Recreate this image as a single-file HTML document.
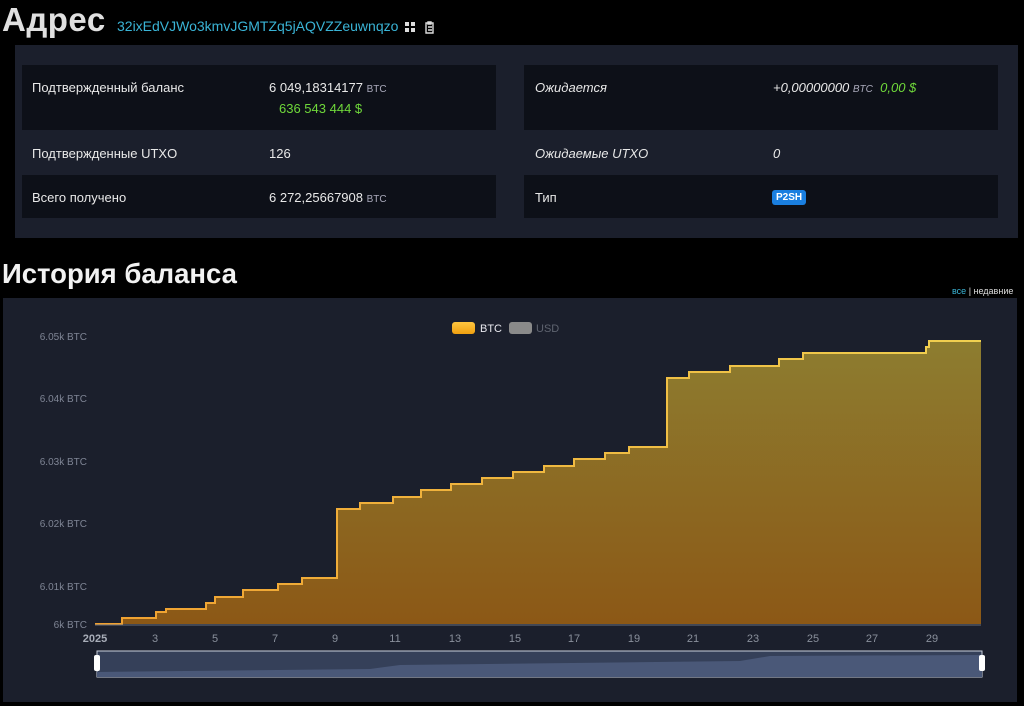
<!DOCTYPE html>
<html><head><meta charset="utf-8"><style>
*{margin:0;padding:0;box-sizing:border-box}
body{width:1024px;height:706px;background:#000;font-family:"Liberation Sans","DejaVu Sans",sans-serif;color:#e6e6e6;position:relative;overflow:hidden}
.a{position:absolute;white-space:nowrap}
.panel{background:#1b1f2c}
.dark{background:#0d1018}
.l{font-size:13px;color:#e8e8e8}
.btc{font-size:10px;color:#aab}
.g{color:#6fd83a}
i{font-style:italic}
</style></head><body>
<div class="a" style="left:2px;top:1px;font-size:33px;color:#e0e0e0;font-weight:bold;letter-spacing:0.5px">Адрес</div>
<div class="a" style="left:117px;top:18px;font-size:14px;color:#3ab4d6">32ixEdVJWo3kmvJGMTZq5jAQVZZeuwnqzo</div>
<svg class="a" style="left:405px;top:21px" width="32" height="14"><g fill="#ddd"><rect x="0" y="1" width="4" height="4"/><rect x="6" y="1" width="4" height="4"/><rect x="0" y="7" width="4" height="4"/><rect x="6" y="7" width="4" height="4"/></g><path d="M21 2h7v10h-7z M23 1h3v2h-3z M23 6h4 M23 9h4" stroke="#ddd" stroke-width="1.4" fill="none"/></svg>

<div class="a panel" style="left:15px;top:45px;width:1003px;height:193px"></div>
<div class="a dark" style="left:22px;top:65px;width:474px;height:65px"></div>
<div class="a dark" style="left:22px;top:175px;width:474px;height:43px"></div>
<div class="a dark" style="left:524px;top:65px;width:474px;height:65px"></div>
<div class="a dark" style="left:524px;top:175px;width:474px;height:43px"></div>

<div class="a l" style="left:32px;top:80px">Подтвержденный баланс</div>
<div class="a l" style="left:269px;top:80px">6 049,18314177 <span class="btc">BTC</span></div>
<div class="a l g" style="left:279px;top:101px">636 543 444 $</div>
<div class="a l" style="left:32px;top:146px">Подтвержденные UTXO</div>
<div class="a l" style="left:269px;top:146px">126</div>
<div class="a l" style="left:32px;top:190px">Всего получено</div>
<div class="a l" style="left:269px;top:190px">6 272,25667908 <span class="btc">BTC</span></div>

<div class="a l" style="left:535px;top:80px"><i>Ожидается</i></div>
<div class="a l" style="left:773px;top:80px"><i>+0,00000000 <span class="btc">BTC</span> &nbsp;<span class="g">0,00 $</span></i></div>
<div class="a l" style="left:535px;top:146px"><i>Ожидаемые UTXO</i></div>
<div class="a l" style="left:773px;top:146px"><i>0</i></div>
<div class="a l" style="left:535px;top:190px">Тип</div>
<div class="a" style="left:772px;top:190px;background:#1a7fe0;color:#fff;font-size:10px;font-weight:bold;padding:2px 4px;border-radius:3px">P2SH</div>

<div class="a" style="left:2px;top:258px;font-size:27.5px;font-weight:bold;color:#f2f2f2">История баланса</div>
<div class="a" style="left:952px;top:286px;font-size:9px;color:#ddd"><span style="color:#3ab4d6">все</span> | недавние</div>

<div class="a panel" style="left:3px;top:298px;width:1014px;height:404px"></div>
<svg class="a" style="left:0;top:0" width="1024" height="706">
<defs>
<linearGradient id="f" x1="0" y1="0" x2="0" y2="1"><stop offset="0" stop-color="#8d7d30"/><stop offset="1" stop-color="#8c5816"/></linearGradient>
<linearGradient id="s" x1="0" y1="0" x2="1" y2="0"><stop offset="0" stop-color="#f0a030"/><stop offset="1" stop-color="#f0d050"/></linearGradient>
<linearGradient id="lg" x1="0" y1="0" x2="0" y2="1"><stop offset="0" stop-color="#ffc640"/><stop offset="1" stop-color="#f0a010"/></linearGradient>
</defs>
<g font-size="10" fill="#7f8595" text-anchor="end">
<text x="87" y="340">6.05k BTC</text><text x="87" y="402">6.04k BTC</text><text x="87" y="465">6.03k BTC</text><text x="87" y="527">6.02k BTC</text><text x="87" y="590">6.01k BTC</text><text x="87" y="628">6k BTC</text>
</g>
<path d="M95 624H122V618H156V612H166V609H206V603H215V597H243V590H278V584H302V578H337V509H360V503H393V497H421V490H451V484H482V478H513V472H544V466H574V459H605V453H629V447H667V378H689V372H730V366H779V359H803V353H926V347H929V341H981V624Z" fill="url(#f)"/>
<path d="M95 624H122V618H156V612H166V609H206V603H215V597H243V590H278V584H302V578H337V509H360V503H393V497H421V490H451V484H482V478H513V472H544V466H574V459H605V453H629V447H667V378H689V372H730V366H779V359H803V353H926V347H929V341H981" fill="none" stroke="url(#s)" stroke-width="2"/>
<line x1="95" y1="625" x2="981" y2="625" stroke="#6a6f7c"/>
<g font-size="11" fill="#8a909c" text-anchor="middle">
<text x="95" y="642" font-weight="bold" fill="#a8adb8">2025</text>
<text x="155" y="642">3</text><text x="215" y="642">5</text><text x="275" y="642">7</text><text x="335" y="642">9</text><text x="395" y="642">11</text><text x="455" y="642">13</text><text x="515" y="642">15</text><text x="574" y="642">17</text><text x="634" y="642">19</text><text x="693" y="642">21</text><text x="753" y="642">23</text><text x="813" y="642">25</text><text x="872" y="642">27</text><text x="932" y="642">29</text>
</g>
<rect x="97" y="651" width="885" height="26" fill="#354059" stroke="#c9cfdc" stroke-width="1"/>
<path d="M97 672L370 669L400 665L740 661L770 656L982 655V677H97Z" fill="#4a5878"/>
<rect x="94" y="655" width="6" height="16" rx="2" fill="#fff"/>
<rect x="979" y="655" width="6" height="16" rx="2" fill="#fff"/>
<rect x="452" y="322" width="23" height="12" rx="3" fill="url(#lg)"/>
<text x="480" y="332" font-size="11" fill="#e8e8ee">BTC</text>
<rect x="509" y="322" width="23" height="12" rx="3" fill="#8a8a8a"/>
<text x="536" y="332" font-size="11" fill="#5f6470">USD</text>
</svg>
</body></html>
